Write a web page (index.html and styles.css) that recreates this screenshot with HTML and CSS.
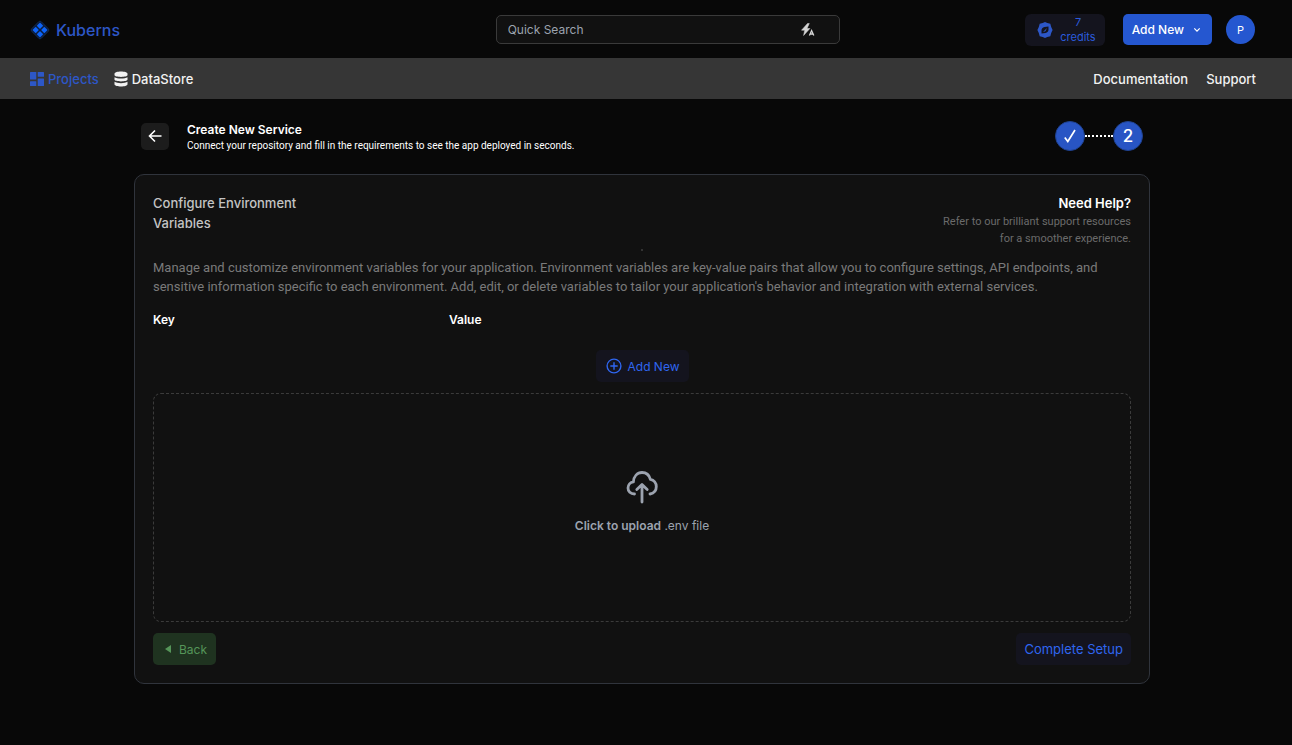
FILE: index.html
```html
<!DOCTYPE html>
<html lang="en">
<head>
  <meta charset="UTF-8">
  <meta name="viewport" content="width=device-width, initial-scale=1.0">
  <title>Kuberns</title>
  <link rel="stylesheet" href="styles.css">
</head>
<body>
  <header class="topbar">
    <a class="logo" href="#">
      <svg width="20" height="20" viewBox="0 0 20 20">
        <rect x="3.2" y="3.2" width="13.6" height="13.6" rx="2" transform="rotate(45 10 10)" fill="#0b1d3d" stroke="#14305f" stroke-width=".7"/>
        <g fill="#0d63f8">
          <rect x="7.7" y="3.4" width="4.6" height="4.6" rx=".7" transform="rotate(45 10 5.7)"/>
          <rect x="7.7" y="12" width="4.6" height="4.6" rx=".7" transform="rotate(45 10 14.3)"/>
          <rect x="3.4" y="7.7" width="4.6" height="4.6" rx=".7" transform="rotate(45 5.7 10)"/>
          <rect x="12" y="7.7" width="4.6" height="4.6" rx=".7" transform="rotate(45 14.3 10)"/>
        </g>
      </svg>
      <span>Kuberns</span>
    </a>

    <div class="search">
      <input type="text" placeholder="Quick Search" aria-label="Quick Search">
      <svg width="14" height="14" viewBox="0 0 14 14">
        <path d="M6.5 .5L.5 7.2h3.2L2.6 12.5l6.3-7H6L8.3 .5z" fill="#d4d4d4" stroke="#d4d4d4" stroke-linejoin="round" stroke-width=".5"/>
        <path d="M8.4 12.6l2.2-5 2.2 5M9.2 11h2.8" fill="none" stroke="#d4d4d4" stroke-width="1.3"/>
      </svg>
    </div>

    <div class="actions">
      <div class="credits">
        <svg width="16" height="16" viewBox="0 0 16 16" fill="#2d57c7">
          <path fill-rule="evenodd" d="M8 0L10.3 1.1 13.3 1.8 14.2 4.900 15.600 8 14.200 11.100 13.300 14.200 10.300 14.900 8 16 5.700 14.900 2.700 14.200 1.800 11.100 .400 8 1.800 4.900 2.700 1.800 5.700 1.100zM11.500 4.500L7.500 5C5.500 5.300 4.500 6.600 4.500 8.500V11.500L8.500 11C10.500 10.700 11.500 9.400 11.500 7.500z"/>
          <path d="M6 10L10 6 8.400 9.200z"/>
        </svg>
        <span>7<br>credits</span>
      </div>
      <button class="btn-add" type="button">
        Add New
        <svg width="8" height="6" viewBox="0 0 8 6"><path d="M1.300 1.400L4 4.100l2.700-2.700" fill="none" stroke="#fff" stroke-width="1.200"/></svg>
      </button>
      <button class="avatar" type="button">P</button>
    </div>
  </header>

  <nav class="navbar">
    <div class="nav-left">
      <a class="active" href="#">
        <svg width="14" height="14" viewBox="0 0 14 14" fill="currentColor">
          <rect width="6.300" height="7.600" rx=".5"/>
          <rect y="9.200" width="6.300" height="4.800" rx=".5"/>
          <rect x="7.700" width="6.300" height="4.800" rx=".5"/>
          <rect x="7.700" y="6.400" width="6.300" height="7.600" rx=".5"/>
        </svg>
        Projects
      </a>
      <a href="#">
        <svg width="14" height="16" viewBox="0 0 14 16" fill="currentColor">
          <path d="M.500 3C.500-.200 13.500-.200 13.500 3v1c0 2.500-13 2.500-13 0z"/>
          <path d="M.500 6.200c2.500 1.800 10.500 1.800 13 0v2.400c0 2.500-13 2.500-13 0z"/>
          <path d="M.500 10.800c2.500 1.800 10.500 1.800 13 0v2.400c0 3-13 3-13 0z"/>
        </svg>
        DataStore
      </a>
    </div>
    <div class="nav-right">
      <a href="#">Documentation</a>
      <a href="#">Support</a>
    </div>
  </nav>

  <main class="content">
    <div class="page-head">
      <button class="back-arrow" type="button" aria-label="Go back">
        <svg width="14" height="14" viewBox="0 0 14 14"><path d="M7 1.500L1.500 7 7 12.500M1.500 7h12" fill="none" stroke="#fff" stroke-width="1.600"/></svg>
      </button>
      <div class="page-title">
        <h1>Create New Service</h1>
        <p>Connect your repository and fill in the requirements to see the app deployed in seconds.</p>
      </div>
      <div class="steps">
        <span class="step">
          <svg width="14" height="16" viewBox="0 0 14 16"><path d="M1.800 9.500L4.800 13.500 12 2" fill="none" stroke="#fff" stroke-width="1.700"/></svg>
        </span>
        <span class="step-line"></span>
        <span class="step">2</span>
      </div>
    </div>

    <section class="card">
      <div class="card-head">
        <h2>Configure Environment Variables</h2>
        <div class="help">
          <h3>Need Help?</h3>
          <p>Refer to our brilliant support resources for a smoother experience.</p>
        </div>
      </div>
      <div class="divider"></div>
      <p class="description">Manage and customize environment variables for your application. Environment variables are key-value pairs that allow you to configure settings, API endpoints, and sensitive information specific to each environment. Add, edit, or delete variables to tailor your application's behavior and integration with external services.</p>

      <div class="columns">
        <span>Key</span>
        <span>Value</span>
      </div>

      <button class="btn btn-variable" type="button">
        <svg width="16" height="16" viewBox="0 0 16 16" fill="none" stroke="currentColor" stroke-width="1.400">
          <circle cx="8" cy="8" r="6.900"/>
          <path d="M8 4.300v7.400M4.300 8h7.400"/>
        </svg>
        Add New
      </button>

      <label class="upload">
        <input type="file">
        <svg width="32" height="34" viewBox="0 0 32 34" fill="none" stroke="#9ca3af" stroke-width="2.800" stroke-linecap="round" stroke-linejoin="round">
          <path d="M8.500 24C4.500 24 2 21.300 2 18c0-3.300 2.300-5.800 5.400-6.200C7.800 6.300 11.200 2.500 16 2.500c4.300 0 7.300 2.700 8.400 6.800C28 10 30.300 13 30.300 16.500c0 3.800-2.500 6.800-6.300 7.500"/>
          <path d="M16 32V15.500M10.800 19.500L16 14.500l5.200 5"/>
        </svg>
        <span><b>Click to upload</b> .env file</span>
      </label>

      <div class="card-foot">
        <button class="btn btn-back" type="button">
          <svg width="6" height="8" viewBox="0 0 6 8"><path d="M6 0v8L0 4z" fill="currentColor"/></svg>
          Back
        </button>
        <button class="btn btn-complete" type="button">Complete Setup</button>
      </div>
    </section>
  </main>
</body>
</html>
```
FILE: styles.css
```css
* {
  box-sizing: border-box;
}

body {
  margin: 0;
  min-height: 100vh;
  background: #080808;
  color: #fff;
  font-family: Inter, 'Liberation Sans', sans-serif;
  font-size: 12px;
}

h1, h2, h3, p {
  margin: 0;
}

a {
  color: inherit;
  text-decoration: none;
}

button {
  border: none;
  cursor: pointer;
  font: inherit;
}

svg {
  flex-shrink: 0;
}

.topbar {
  display: flex;
  align-items: center;
  justify-content: space-between;
  height: 58px;
  padding: 1px 37px 0 30px;
}

.logo {
  display: flex;
  align-items: center;
  gap: 6px;
  width: 280px;
  color: #2d57c7;
  font-size: 16px;
  font-weight: 500;
}

.search {
  display: flex;
  align-items: center;
  width: 344px;
  height: 29px;
  padding: 0 24px 0 11px;
  background: #111;
  border: 1px solid #3a3a3a;
  border-radius: 5px;
}

.search input {
  flex: 1;
  min-width: 0;
  padding: 0;
  border: none;
  outline: none;
  background: none;
  color: #fff;
  font: inherit;
}

.search input::placeholder {
  color: #9ca3af;
}

.actions {
  display: flex;
  align-items: center;
}

.credits {
  display: flex;
  align-items: center;
  gap: 7px;
  height: 32px;
  margin-right: 18px;
  padding: 0 9px 0 12px;
  border-radius: 6px;
  background: #14141e;
  color: #2b5bdc;
  font-size: 11px;
  line-height: 15px;
  text-align: center;
}

.btn-add {
  display: flex;
  align-items: center;
  gap: 9px;
  height: 31px;
  margin-right: 14px;
  padding: 0 11px 0 9px;
  border-radius: 5px;
  background: #2557d0;
  color: #fff;
  font-weight: 500;
}

.avatar {
  width: 29px;
  height: 29px;
  padding: 0;
  border-radius: 50%;
  background: #2557d0;
  color: #fff;
  font-size: 11px;
}

.navbar {
  display: flex;
  align-items: center;
  justify-content: space-between;
  height: 41px;
  padding: 0 36px 0 30px;
  background: #363636;
  color: #f2f2f2;
  font-size: 13px;
  font-weight: 500;
}

.nav-left {
  display: flex;
  gap: 15px;
}

.nav-left a {
  display: flex;
  align-items: center;
  gap: 4px;
}

.nav-left .active {
  color: #2d57c7;
}

.nav-right {
  display: flex;
  gap: 18px;
}

.content {
  max-width: 1048px;
  margin: 0 auto;
  padding: 21px 20px 61px 12px;
}

.page-head {
  display: flex;
  align-items: center;
  height: 32px;
  margin-bottom: 22px;
  padding: 0 7px;
}

.back-arrow {
  display: flex;
  align-items: center;
  justify-content: center;
  width: 28px;
  height: 27px;
  padding: 0;
  border-radius: 5px;
  background: #1c1c1c;
}

.page-title {
  flex: 1;
  margin-left: 18px;
  padding-top: 3px;
}

.page-title h1 {
  font-size: 12px;
  font-weight: 600;
  line-height: 16px;
}

.page-title p {
  font-family: Roboto, 'Liberation Sans', sans-serif;
  font-size: 10px;
  line-height: 16px;
}

.steps {
  display: flex;
  align-items: center;
}

.step {
  display: flex;
  align-items: center;
  justify-content: center;
  width: 30px;
  height: 30px;
  border: 1px solid #1f428f;
  border-radius: 50%;
  background: #2855c4;
  font-size: 17px;
  font-weight: 500;
}

.step-line {
  width: 28px;
  border-top: 2px dotted #fff;
}

.card {
  display: flex;
  flex-direction: column;
  padding: 18px;
  border: 1px solid #30343c;
  border-radius: 10px;
  background: #111;
}

.card-head {
  display: flex;
  justify-content: space-between;
}

.card-head h2 {
  width: 160px;
  color: #c4c4c4;
  font-size: 13px;
  font-weight: 500;
  line-height: 20px;
}

.help {
  width: 196px;
  text-align: right;
}

.help h3 {
  font-size: 13px;
  font-weight: 600;
  line-height: 20px;
}

.help p {
  color: #6b6b6b;
  font-family: Roboto, 'Liberation Sans', sans-serif;
  font-size: 11px;
  line-height: 17px;
}

.divider {
  align-self: center;
  width: 2px;
  height: 2px;
  margin: 2px 0 7px;
  background: #333;
}

.description {
  color: #7a7a7a;
  font-family: Roboto, 'Liberation Sans', sans-serif;
  font-size: 13px;
  line-height: 19px;
}

.columns {
  display: flex;
  margin-top: 14px;
  font-weight: 600;
  line-height: 20px;
}

.columns span {
  width: 296px;
}

.btn {
  display: flex;
  align-items: center;
  height: 32px;
  padding: 0 8px;
  border-radius: 5px;
  background: #14141e;
  color: #2f66f0;
}

.btn-variable {
  align-self: center;
  gap: 6px;
  margin: 20px 0 11px;
  padding: 0 9px 0 10px;
}

.upload {
  display: flex;
  flex-direction: column;
  align-items: center;
  justify-content: center;
  gap: 12px;
  height: 229px;
  padding-bottom: 9px;
  border: 1px dashed #3b3b3b;
  border-radius: 8px;
  color: #9ca3af;
  cursor: pointer;
  line-height: 20px;
}

.upload input {
  display: none;
}

.upload b {
  font-weight: 600;
}

.card-foot {
  display: flex;
  justify-content: space-between;
  margin-top: 11px;
}

.btn-back {
  gap: 8px;
  padding: 0 9px 0 12px;
  background: #1f3320;
  color: #559559;
}

.btn-complete {
  font-size: 13px;
}
```
